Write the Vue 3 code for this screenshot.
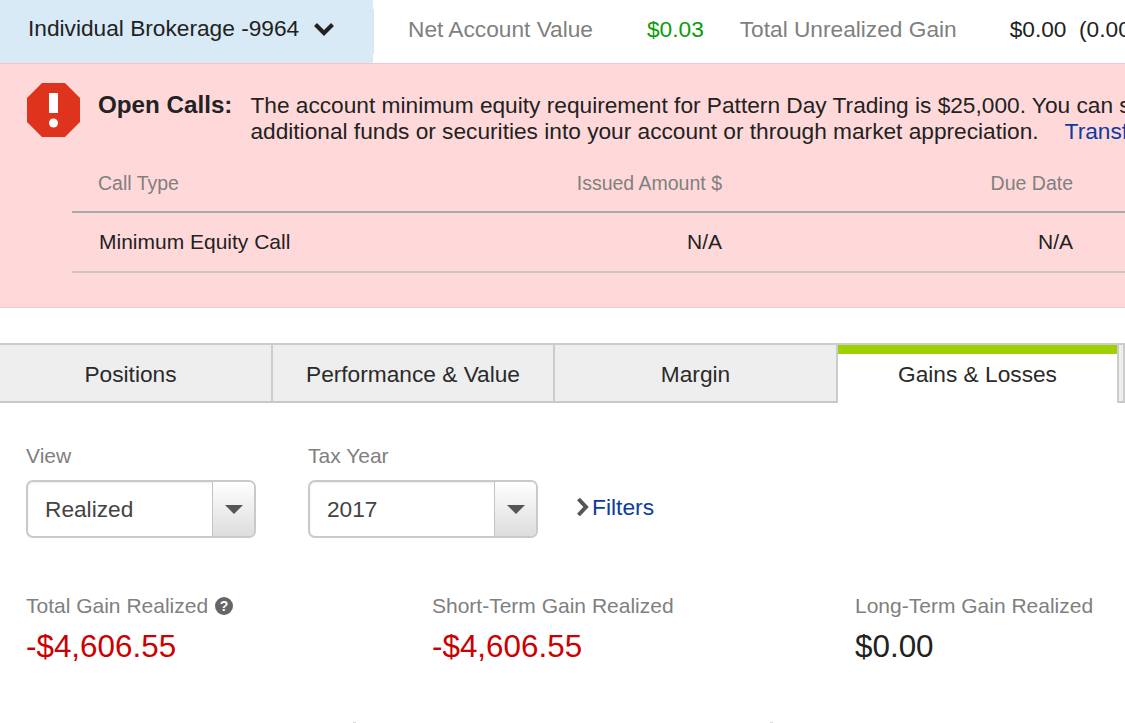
<script setup>
const tabs = [
  { label: 'Positions', width: 283 },
  { label: 'Performance & Value', width: 282 },
  { label: 'Margin', width: 283 },
  { label: 'Gains & Losses', width: 281, active: true },
]

const selects = [
  { label: 'View', value: 'Realized' },
  { label: 'Tax Year', value: '2017' },
]
</script>

<template>
  <div class="page">
    <header class="topbar">
      <div class="account">
        <span>Individual Brokerage -9964</span>
        <svg class="chevron" width="22" height="14" viewBox="0 0 22 14">
          <path d="M2.5 2.5l8.5 8.5 8.500-8.500" fill="none" stroke="#222" stroke-width="4.200" />
        </svg>
      </div>
      <div class="stats">
        <span class="muted net-label">Net Account Value</span>
        <span class="green net-value">$0.03</span>
        <span class="muted gain-label">Total Unrealized Gain</span>
        <span class="gain-value">$0.00&nbsp; (0.00%)</span>
      </div>
    </header>

    <section class="alert">
      <div class="alert-head">
        <svg class="alert-icon" width="53" height="54" viewBox="0 0 53 54">
          <path d="M15 0h23l15 15v24L38 54H15L0 39V15z" fill="#de331c" />
          <rect x="22" y="10" width="9" height="20" fill="#fff" />
          <circle cx="26.500" cy="40" r="4.500" fill="#fff" />
        </svg>
        <strong class="alert-title">Open Calls:</strong>
        <p class="alert-text">
          The account minimum equity requirement for Pattern Day Trading is $25,000. You can satisfy this by depositing<br />
          additional funds or securities into your account or through market appreciation.<a class="transfer">Transfer Funds</a>
        </p>
      </div>
      <div class="calls">
        <div class="calls-row calls-header">
          <span>Call Type</span>
          <span class="right">Issued Amount $</span>
          <span class="right">Due Date</span>
        </div>
        <div class="calls-row calls-body">
          <span class="first">Minimum Equity Call</span>
          <span class="right">N/A</span>
          <span class="right">N/A</span>
        </div>
      </div>
    </section>

    <nav class="tabs">
      <div
        v-for="tab in tabs"
        :key="tab.label"
        class="tab"
        :class="{ active: tab.active }"
        :style="{ width: tab.width + 'px' }"
      >
        {{ tab.label }}
      </div>
      <div class="tab rest"></div>
    </nav>

    <section class="filters">
      <div v-for="item in selects" :key="item.label" class="field">
        <label>{{ item.label }}</label>
        <div class="select">
          <span class="select-value">{{ item.value }}</span>
          <span class="select-btn"><i class="caret"></i></span>
        </div>
      </div>
      <div class="filter-link">
        <svg width="14" height="20" viewBox="0 0 14 20">
          <path d="M2.500 2l7.500 8-7.500 8" fill="none" stroke="#555" stroke-width="4" />
        </svg>
        <a>Filters</a>
      </div>
    </section>

    <section class="summary">
      <div class="metric m1">
        <div class="metric-label">
          Total Gain Realized
          <span class="help">?</span>
        </div>
        <div class="metric-value red">-$4,606.55</div>
      </div>
      <div class="metric m2">
        <div class="metric-label">Short-Term Gain Realized</div>
        <div class="metric-value red">-$4,606.55</div>
      </div>
      <div class="metric">
        <div class="metric-label">Long-Term Gain Realized</div>
        <div class="metric-value">$0.00</div>
      </div>
    </section>

    <div class="next-row">
      <i></i>
      <i></i>
    </div>
  </div>
</template>

<style>
html,
body {
  margin: 0;
  background: #fff;
  overflow: hidden;
}
</style>

<style scoped>
.page {
  width: 1125px;
  height: 723px;
  overflow: hidden;
  font-family: "Liberation Sans", Arial, sans-serif;
  color: #222;
  background: #fff;
}

.topbar {
  display: flex;
  height: 63px;
  white-space: nowrap;
}

.account {
  width: 373px;
  flex: none;
  box-sizing: border-box;
  padding-left: 28px;
  padding-bottom: 6px;
  display: flex;
  align-items: center;
  gap: 14px;
  background: #d8eaf5;
  font-size: 22.7px;
}

.stats {
  display: flex;
  align-items: center;
  height: 45px;
  margin: 9px 0;
  padding-left: 34px;
  padding-bottom: 4px;
  box-sizing: border-box;
  border-left: 1px solid #e4e4e4;
  font-size: 22.7px;
}

.muted {
  color: #808080;
}

.green {
  color: #0a9c0a;
}

.net-value {
  margin-left: 54px;
}

.gain-label {
  margin-left: 36px;
}

.gain-value {
  margin-left: 53px;
}

.alert {
  height: 245px;
  box-sizing: border-box;
  background: #ffd9da;
  border-top: 1px solid #f9c4c9;
  border-bottom: 1px solid #f6c8cb;
  padding: 19px 0 0 27px;
}

.alert-head {
  display: flex;
  white-space: nowrap;
}

.alert-icon {
  flex: none;
}

.alert-title {
  font-size: 24.2px;
  margin-left: 18px;
  margin-top: 9px;
  line-height: 26px;
}

.alert-text {
  margin: 9px 0 0 18px;
  font-size: 22.7px;
  line-height: 26px;
}

.transfer {
  margin-left: 26px;
  color: #0b3c9e;
}

.calls {
  margin: 13px 0 0 45px;
  width: 1100px;
}

.calls-row {
  display: grid;
  grid-template-columns: 273px 351px 351px;
  align-items: center;
  padding-left: 26px;
  box-sizing: border-box;
}

.calls-header {
  height: 56px;
  padding-bottom: 2px;
  font-size: 19.5px;
  color: #808080;
  border-bottom: 2px solid #a9a9a9;
}

.calls-body {
  height: 60px;
  font-size: 21px;
  border-bottom: 2px solid #c6c6c6;
}

.first {
  padding-left: 1px;
}

.right {
  text-align: right;
}

.tabs {
  display: flex;
  margin: 35px 0 0 -10px;
  height: 60px;
}

.tab {
  box-sizing: border-box;
  flex: none;
  display: flex;
  align-items: center;
  justify-content: center;
  padding-top: 2px;
  background: #eeeeee;
  border-top: 2px solid #cccccc;
  border-bottom: 2px solid #c8c8c8;
  border-right: 2px solid #cccccc;
  font-size: 22.7px;
  color: #2a2a2a;
}

.tab.active {
  padding-top: 0;
  background: linear-gradient(#9fd000 9px, #fff 9px);
  border-bottom: none;
}

.tab.rest {
  flex: 1;
}

.filters {
  display: flex;
  margin-top: 41px;
  padding-left: 26px;
  gap: 52px;
}

.field label {
  display: block;
  font-size: 21px;
  color: #808080;
  line-height: 24px;
}

.select {
  margin-top: 12px;
  width: 230px;
  height: 58px;
  box-sizing: border-box;
  border: 2px solid #c9c9c9;
  border-radius: 7px;
  display: flex;
  overflow: hidden;
  box-shadow: inset 0 1px 2px rgba(0, 0, 0, 0.08);
}

.select-value {
  flex: 1;
  padding-left: 17px;
  font-size: 22.7px;
  line-height: 54px;
  color: #444;
}

.select-btn {
  width: 41px;
  border-left: 1px solid #c4c4c4;
  background: linear-gradient(#ffffff, #dddddd);
  display: flex;
  align-items: center;
  justify-content: center;
}

.caret {
  border-left: 9px solid transparent;
  border-right: 9px solid transparent;
  border-top: 9px solid #555;
}

.filter-link {
  display: flex;
  align-items: center;
  gap: 2px;
  margin-top: 36px;
  margin-left: -14px;
  height: 58px;
  font-size: 22.8px;
  color: #0b3c9e;
}

.filter-link svg,
.filter-link a {
  margin-bottom: 4px;
}

.summary {
  display: flex;
  margin-top: 56px;
  padding-left: 26px;
}

.metric {
  white-space: nowrap;
}

.m1 {
  width: 406px;
}

.m2 {
  width: 423px;
}

.metric-label {
  display: flex;
  align-items: center;
  gap: 7px;
  font-size: 21px;
  line-height: 24px;
  color: #808080;
}

.metric-value {
  margin-top: 11px;
  font-size: 31.4px;
  line-height: 36px;
}

.red {
  color: #cc0000;
}

.help {
  width: 18px;
  height: 18px;
  border-radius: 50%;
  background: #666;
  color: #fff;
  font-size: 14px;
  font-weight: bold;
  line-height: 18px;
  text-align: center;
}

.next-row {
  display: flex;
  gap: 414px;
  margin-top: 57px;
  padding-left: 353px;
}

.next-row i {
  width: 3px;
  height: 1px;
  background: #d8d8d8;
}
</style>
